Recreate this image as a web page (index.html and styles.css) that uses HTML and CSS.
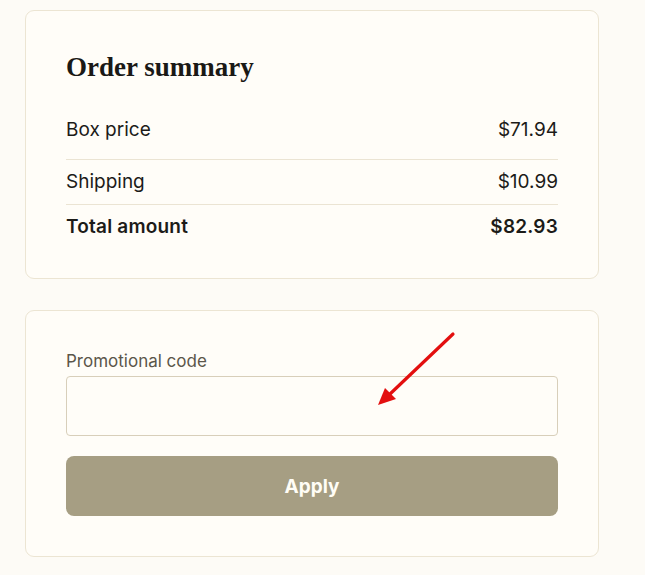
FILE: index.html
```html
<!DOCTYPE html>
<html lang="en">
<head>
<meta charset="utf-8">
<title>Order summary</title>
<link rel="stylesheet" href="styles.css">
</head>
<body>
<main class="page">
  <section class="card summary">
    <h2 class="title">Order summary</h2>
    <div class="row row-first"><span>Box price</span><span>$71.94</span></div>
    <div class="row"><span>Shipping</span><span>$10.99</span></div>
    <div class="row row-total"><span>Total amount</span><span>$82.93</span></div>
  </section>
  <section class="card promo">
    <label class="label" for="code">Promotional code</label>
    <input class="input" id="code" type="text">
    <button class="apply" type="button">Apply</button>
    <svg class="arrow" width="100" height="90" viewBox="0 0 100 90">
      <line x1="85" y1="14" x2="22" y2="74" stroke="#e30f0f" stroke-width="3.2" stroke-linecap="round"/>
      <polygon points="10,85 17,68 28,79" fill="#e30f0f"/>
    </svg>
  </section>
</main>
</body>
</html>
```
FILE: styles.css
```css
html, body {
  margin: 0;
  padding: 0;
  background: #fdfbf6;
}
body {
  font-family: Inter, "Noto Sans", "Liberation Sans", sans-serif;
  color: #1c1b18;
}
.page {
  width: 574px;
  margin-left: 25px;
  padding-top: 10px;
  display: flex;
  flex-direction: column;
  gap: 31px;
}
.card {
  background: #fffdf8;
  border: 1px solid #ece5d3;
  border-radius: 9px;
}
.summary {
  padding: 40px 40px 29px;
}
.title {
  margin: 0 0 25px;
  font-family: "Liberation Serif", "DejaVu Serif", serif;
  font-weight: 700;
  font-size: 27px;
  line-height: 32px;
  color: #1a1916;
}
.row {
  display: flex;
  justify-content: space-between;
  font-size: 19px;
  line-height: 22px;
  padding: 11px 0;
  border-top: 1px solid #ebe4d3;
}
.row-first {
  border-top: none;
  padding-bottom: 18px;
}
.row-total {
  font-weight: 600;
  letter-spacing: 0.2px;
}
.promo {
  position: relative;
  padding: 40px;
  display: flex;
  flex-direction: column;
}
.label {
  font-size: 17px;
  line-height: 20px;
  color: #5b564a;
  margin-bottom: 5px;
}
.input {
  box-sizing: border-box;
  height: 60px;
  width: 100%;
  border: 1px solid #d8cfba;
  border-radius: 4px;
  background: #fffdf8;
  margin: 0 0 20px;
}
.apply {
  height: 60px;
  border: none;
  border-radius: 8px;
  background: #a69e83;
  color: #fffdf6;
  font-family: Inter, "Noto Sans", "Liberation Sans", sans-serif;
  font-weight: 700;
  font-size: 19px;
}
.arrow {
  position: absolute;
  left: 342px;
  top: 9px;
}
```
